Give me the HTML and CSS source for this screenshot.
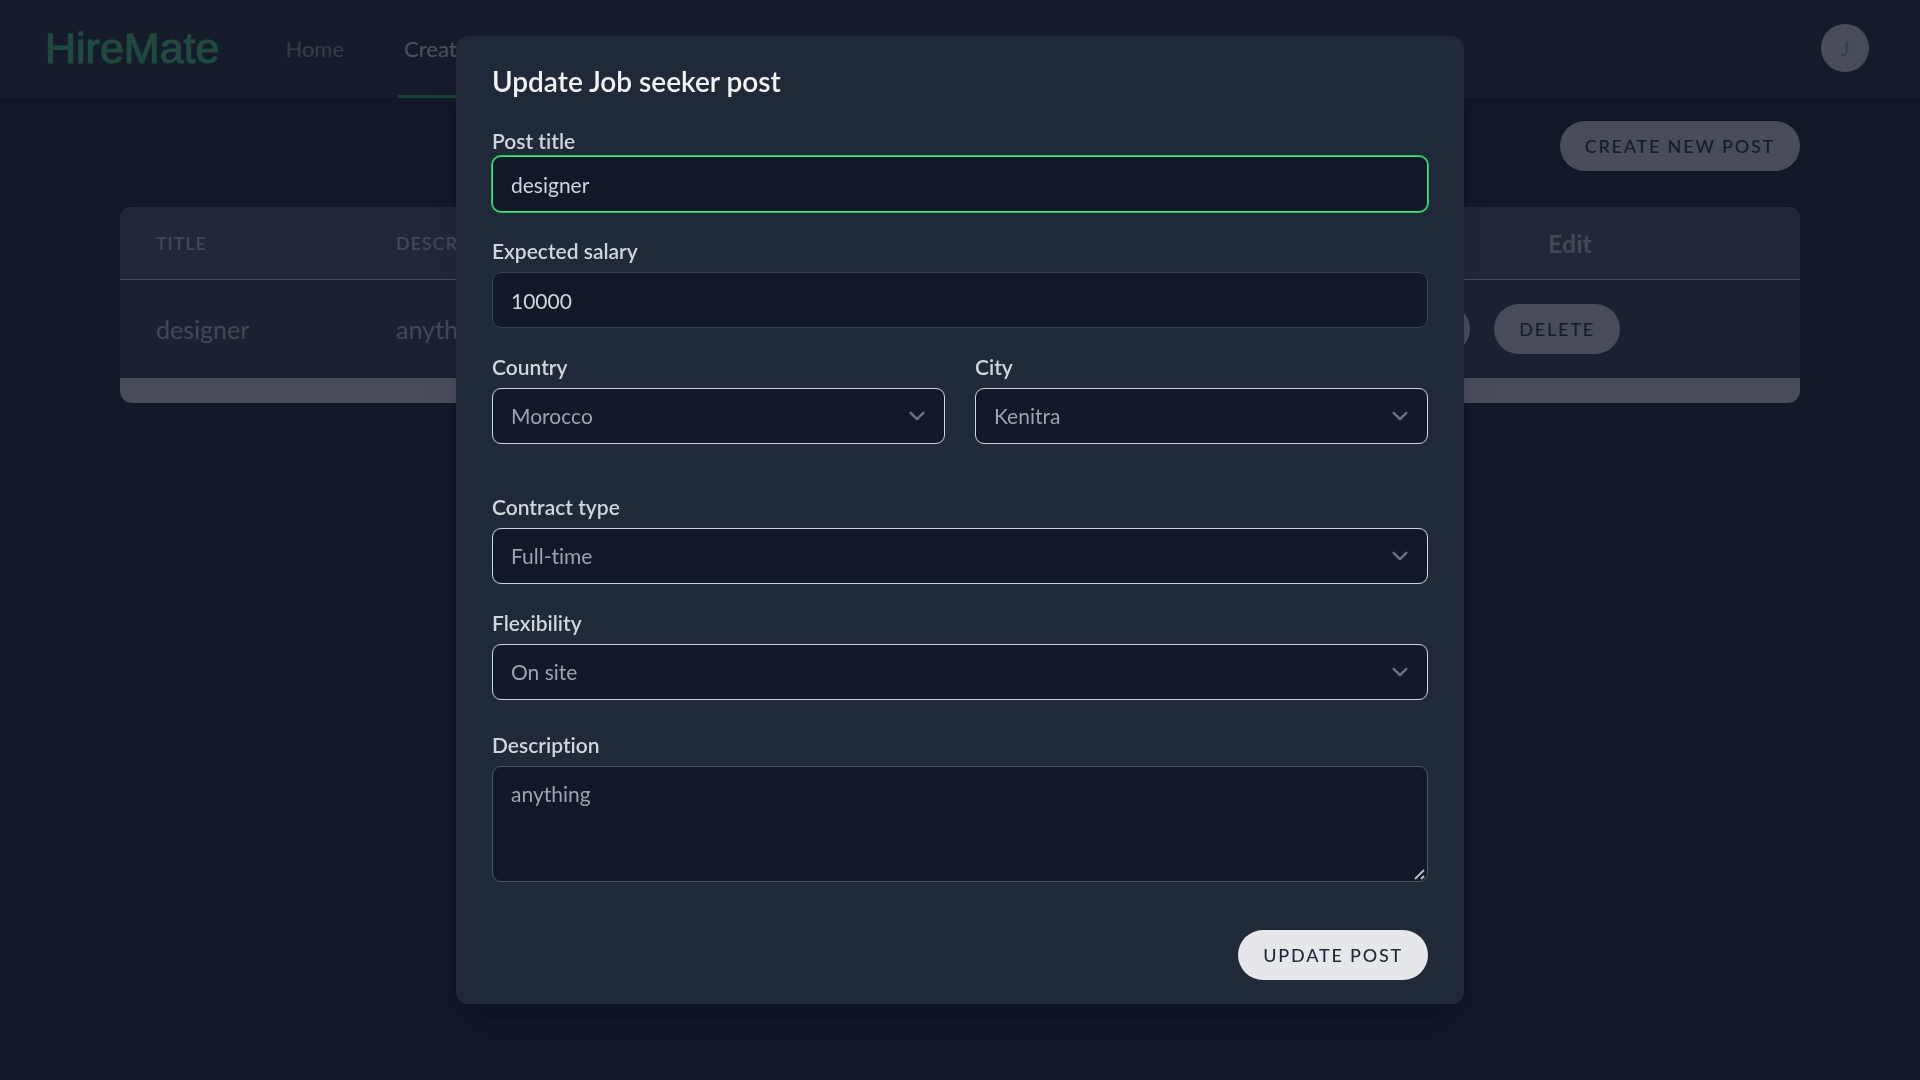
FILE: index.html
```html
<!DOCTYPE html>
<html lang="en">
<head>
<meta charset="utf-8">
<meta name="viewport" content="width=device-width, initial-scale=1">
<title>HireMate</title>
<link rel="stylesheet" href="styles.css">
</head>
<body>
<header class="topbar">
  <a class="logo" href="#">HireMate</a>
  <nav class="nav">
    <a class="nav-link" href="#">Home</a>
    <a class="nav-link active" href="#">Create Post</a>
  </nav>
  <button class="avatar" type="button">J</button>
</header>
<main class="content">
  <div class="toolbar"><button class="btn" type="button">Create new post</button></div>
  <div class="table-card">
    <table class="posts">
      <colgroup><col class="col-title"><col><col class="col-edit"></colgroup>
      <thead>
        <tr><th>Title</th><th>Description</th><th class="edit-head">Edit</th></tr>
      </thead>
      <tbody>
        <tr>
          <td>designer</td>
          <td>anything</td>
          <td class="edit-cell"><div class="actions"><button class="btn" type="button">Update</button><button class="btn" type="button">Delete</button></div></td>
        </tr>
      </tbody>
    </table>
  </div>
</main>
<div class="overlay">
  <form class="modal" role="dialog" aria-labelledby="modal-title">
    <h2 class="modal-title" id="modal-title">Update Job seeker post</h2>
    <div class="field tight">
      <label for="title">Post title</label>
      <input class="control focused" id="title" type="text" value="designer">
    </div>
    <div class="field">
      <label for="salary">Expected salary</label>
      <input class="control" id="salary" type="text" value="10000">
    </div>
    <div class="field-row">
      <div class="field">
        <label for="country">Country</label>
        <select class="control" id="country"><option>Morocco</option></select>
      </div>
      <div class="field">
        <label for="city">City</label>
        <select class="control" id="city"><option>Kenitra</option></select>
      </div>
    </div>
    <div class="field">
      <label for="contract">Contract type</label>
      <select class="control" id="contract"><option>Full-time</option></select>
    </div>
    <div class="field">
      <label for="flexibility">Flexibility</label>
      <select class="control" id="flexibility"><option>On site</option></select>
    </div>
    <div class="field description">
      <label for="description">Description</label>
      <textarea class="control" id="description" rows="3">anything</textarea>
    </div>
    <div class="modal-actions"><button class="btn" type="submit">Update post</button></div>
  </form>
</div>
</body>
</html>
```
FILE: styles.css
```css
*, *::before, *::after { box-sizing: border-box; }

body {
  margin: 0;
  min-height: 100vh;
  background: #111827;
  color: #d1d5db;
  font: 21px/30px Lato, "Open Sans", sans-serif;
  font-variant-ligatures: none;
}

button, input, select, textarea { font: inherit; font-variant-ligatures: none; }
a { color: inherit; text-decoration: none; }

/* Top bar */
.topbar {
  display: flex;
  align-items: center;
  height: 97px;
  padding: 0 51px 0 45px;
  background: #1f2937;
  border-bottom: 1px solid #2b3544;
}
.logo {
  color: #4ade80;
  font: 400 43px/48px "Liberation Sans", Arial, sans-serif;
  -webkit-text-stroke: 1px #4ade80;
}
.nav {
  display: flex;
  align-self: stretch;
  gap: 48px;
  margin: 0 auto 0 60px;
}
.nav-link {
  display: flex;
  align-items: center;
  height: 98px;
  padding: 3px 6px 0;
  color: #9ca3af;
  font-size: 22px;
  border-bottom: 3px solid transparent;
}
.nav-link.active {
  color: #f3f4f6;
  border-color: #22c55e;
}
.avatar {
  width: 48px;
  height: 48px;
  padding: 0;
  border: 0;
  border-radius: 50%;
  background: #e5e7eb;
  color: #9a9fda;
}

/* Posts list */
.content { padding: 24px 120px; }
.toolbar {
  display: flex;
  justify-content: flex-end;
  margin-bottom: 36px;
}
.btn {
  padding: 12px 24px;
  border: 1px solid transparent;
  border-radius: 25px;
  background: #e5e7eb;
  color: #1f2937;
  font-size: 18px;
  font-weight: 500;
  line-height: 24px;
  letter-spacing: 0.1em;
  text-transform: uppercase;
  white-space: nowrap;
}
.table-card {
  overflow: hidden;
  padding-bottom: 25px;
  border-radius: 12px;
  background: #e5e7eb;
}
.posts {
  width: 100%;
  table-layout: fixed;
  border-collapse: collapse;
  text-align: left;
  color: #d1d5db;
}
.col-title { width: 240px; }
.col-edit { width: 460px; }
.posts thead tr { background: #4b5563; border-bottom: 1px solid #e5e7eb; }
.posts tbody tr { background: #374151; }
.posts th {
  height: 72px;
  padding: 0 36px;
  font-size: 18px;
  font-weight: 600;
  letter-spacing: 0.05em;
  text-transform: uppercase;
}
.posts .edit-head {
  padding: 0;
  font-size: 25px;
  font-weight: 700;
  letter-spacing: normal;
  text-align: center;
  text-transform: none;
}
.posts td { padding: 24px 36px; font-size: 25px; }
.posts .edit-cell { padding: 24px 0; }
.actions { display: flex; gap: 24px; }

/* Modal */
.overlay {
  position: fixed;
  inset: 0;
  padding: 36px 24px;
  overflow: auto;
  background: rgba(17, 24, 39, 0.75);
}
.modal {
  display: flex;
  flex-direction: column;
  gap: 24px;
  max-width: 1008px;
  margin: 0 auto;
  padding: 24px 36px;
  border-radius: 12px;
  background: #1f2937;
  box-shadow: 0 30px 38px -8px rgba(0, 0, 0, 0.1), 0 12px 15px -9px rgba(0, 0, 0, 0.1);
}
.modal-title {
  margin: 0;
  color: #f3f4f6;
  font-size: 28px;
  font-weight: 600;
  line-height: 42px;
}
.field {
  display: flex;
  flex-direction: column;
  flex: 1;
  gap: 6px;
}
.field.tight { gap: 0; }
.field label { font-weight: 600; }
.field-row {
  display: flex;
  gap: 30px;
  margin-bottom: 24px;
}
.field.description { margin-top: 6px; }
.control {
  display: block;
  width: 100%;
  padding: 12px 18px;
  border: 1px solid #374151;
  border-radius: 9px;
  outline: 0;
  background: #111827;
  color: #d1d5db;
  line-height: 30px;
}
input.control { height: 56px; }
.control.focused {
  border-color: #4ade80;
  box-shadow: 0 0 0 1px #22c55e;
}
select.control {
  appearance: none;
  height: 56px;
  padding-right: 60px;
  border-color: #d1d5db;
  color: #9ca3af;
  background: #111827 url("data:image/svg+xml,%3Csvg xmlns='http://www.w3.org/2000/svg' fill='none' viewBox='0 0 20 20'%3E%3Cpath stroke='%236b7280' stroke-linecap='round' stroke-linejoin='round' stroke-width='1.5' d='M6 8l4 4 4-4'/%3E%3C/svg%3E") right 11px center / 32px 32px no-repeat;
}
textarea.control {
  height: 116px;
  border-color: #4b5563;
  color: #9ca3af;
  resize: vertical;
}
textarea.control::-webkit-resizer {
  background: url("data:image/svg+xml,%3Csvg xmlns='http://www.w3.org/2000/svg' viewBox='0 0 15 15'%3E%3Cpath stroke='%23b9bcc2' stroke-width='2' d='M3 13l9-9M9 13l3-3'/%3E%3C/svg%3E") right bottom / 15px 15px no-repeat;
}
.modal-actions {
  display: flex;
  justify-content: flex-end;
  margin-top: 24px;
}
```
